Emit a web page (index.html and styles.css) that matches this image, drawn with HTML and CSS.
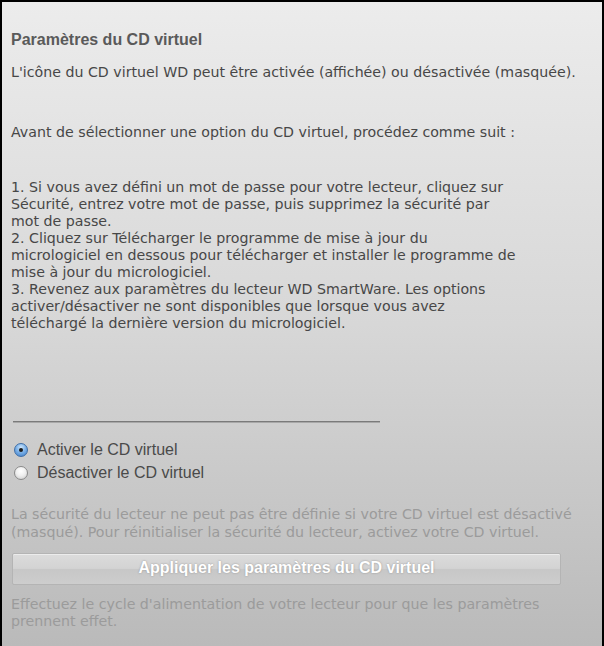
FILE: index.html
```html
<!DOCTYPE html>
<html lang="fr">
<head>
<meta charset="utf-8">
<link rel="stylesheet" href="styles.css">
</head>
<body>
<div class="panel">
  <h1 class="title">Paramètres du CD virtuel</h1>
  <p class="intro">L'icône du CD virtuel WD peut être activée (affichée) ou désactivée (masquée).</p>
  <p class="before">Avant de sélectionner une option du CD virtuel, procédez comme suit :</p>
  <p class="steps">1. Si vous avez défini un mot de passe pour votre lecteur, cliquez sur<br>Sécurité, entrez votre mot de passe, puis supprimez la sécurité par<br>mot de passe.<br>2. Cliquez sur Télécharger le programme de mise à jour du<br>micrologiciel en dessous pour télécharger et installer le programme de<br>mise à jour du micrologiciel.<br>3. Revenez aux paramètres du lecteur WD SmartWare. Les options<br>activer/désactiver ne sont disponibles que lorsque vous avez<br>téléchargé la dernière version du micrologiciel.</p>
  <div class="rule"></div>
  <div class="options">
    <label class="option"><span class="radio checked"></span>Activer le CD virtuel</label>
    <label class="option"><span class="radio"></span>Désactiver le CD virtuel</label>
  </div>
  <p class="note">La sécurité du lecteur ne peut pas être définie si votre CD virtuel est désactivé<br>(masqué). Pour réinitialiser la sécurité du lecteur, activez votre CD virtuel.</p>
  <div class="button">Appliquer les paramètres du CD virtuel</div>
  <p class="note last">Effectuez le cycle d'alimentation de votre lecteur pour que les paramètres<br>prennent effet.</p>
</div>
</body>
</html>
```
FILE: styles.css
```css
html, body {
  margin: 0;
  padding: 0;
  background: #000;
}
.panel {
  box-sizing: border-box;
  width: 604px;
  height: 646px;
  border: 2px solid #000;
  border-bottom: none;
  background: linear-gradient(to bottom, #ececec 0%, #d7d7d7 50%, #bababa 100%);
  padding: 0 0 0 9px;
  font-family: "DejaVu Sans", sans-serif;
  color: #474747;
  overflow: hidden;
  white-space: nowrap;
}
.title {
  margin: 0;
  padding-top: 29px;
  font-family: "Liberation Sans", Arial, sans-serif;
  font-size: 16px;
  font-weight: bold;
  color: #5a5a5a;
  line-height: 18px;
}
.intro {
  margin: 15px 0 0;
  font-size: 14.2px;
  line-height: 17px;
}
.before {
  margin: 43px 0 0;
  font-size: 14.2px;
  line-height: 17px;
}
.steps {
  margin: 38px 0 0;
  font-size: 14.2px;
  line-height: 17px;
}
.rule {
  margin: 89px 0 0 2px;
  width: 367px;
  height: 1px;
  background: #7a7a7a;
  border-bottom: 1px solid #a8a8a8;
}
.options {
  margin-top: 19px;
  display: flex;
  flex-direction: column;
  gap: 8px;
}
.option {
  display: flex;
  align-items: center;
  gap: 9px;
  font-family: "Liberation Sans", Arial, sans-serif;
  font-size: 16px;
  color: #4a4a4a;
  line-height: 15px;
  padding-left: 3px;
}
.radio {
  width: 14px;
  height: 14px;
  border-radius: 50%;
  box-sizing: border-box;
  border: 1px solid #8a8a8a;
  background: radial-gradient(circle at 50% 35%, #ffffff 0%, #f0f0f0 45%, #c8c8c8 100%);
  position: relative;
  flex: none;
}
.radio.checked {
  border-color: #3f6fa8;
  background: radial-gradient(circle at 50% 30%, #cfe6fb 0%, #7fb3e8 45%, #3b7cc8 100%);
}
.radio.checked::after {
  content: "";
  position: absolute;
  left: 4px;
  top: 4px;
  width: 4px;
  height: 4px;
  border-radius: 50%;
  background: #1a1a1a;
}
.note {
  margin: 25px 0 0;
  font-size: 14.2px;
  line-height: 18px;
  color: #9b9b9b;
}
.button {
  margin: 12px 0 0 1px;
  width: 549px;
  height: 32px;
  box-sizing: border-box;
  border: 1px solid #b4b4b4;
  border-radius: 2px;
  background: linear-gradient(to bottom, #dcdcdc 0%, #d3d3d3 48%, #c7c7c7 52%, #cdcdcd 100%);
  box-shadow: inset 0 1px 0 #ececec;
  display: flex;
  align-items: center;
  justify-content: center;
  font-family: "Liberation Sans", Arial, sans-serif;
  font-weight: bold;
  font-size: 16px;
  color: #fff;
  text-shadow: 0 0 2px #8f8f8f;
  padding-bottom: 2px;
  margin-left: 1px;
}
.note.last {
  margin-top: 11px;
  line-height: 17px;
}
```
